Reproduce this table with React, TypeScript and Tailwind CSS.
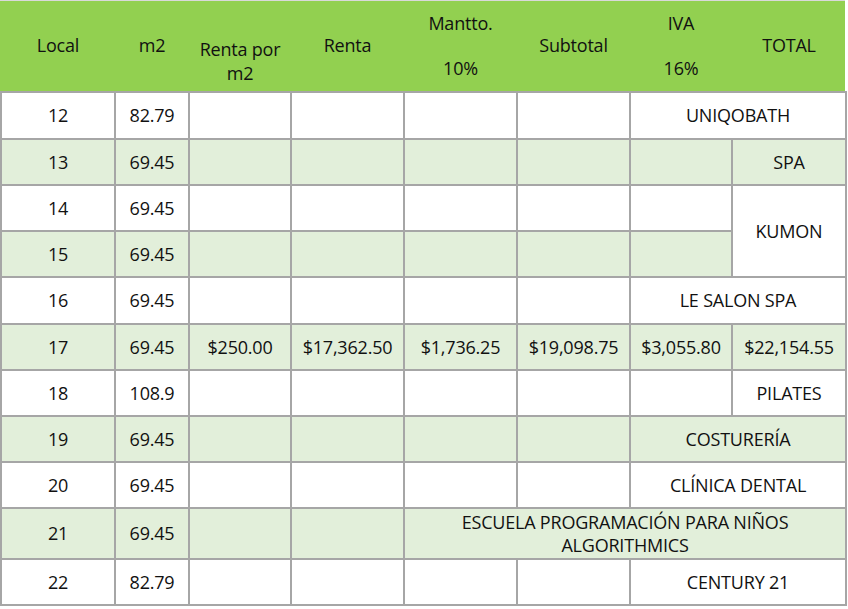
type CellSpec = {
  text?: string
  span?: 2 | 4
  rowSpan?: boolean
  white?: boolean
}

type RowSpec = {
  green: boolean
  cells: (string | CellSpec)[]
}

const rows: RowSpec[] = [
  { green: false, cells: ['12', '82.79', '', '', '', '', { text: 'UNIQOBATH', span: 2 }] },
  { green: true, cells: ['13', '69.45', '', '', '', '', '', 'SPA'] },
  { green: false, cells: ['14', '69.45', '', '', '', '', '', { text: 'KUMON', rowSpan: true, white: true }] },
  { green: true, cells: ['15', '69.45', '', '', '', '', ''] },
  { green: false, cells: ['16', '69.45', '', '', '', '', { text: 'LE SALON SPA', span: 2 }] },
  {
    green: true,
    cells: ['17', '69.45', '$250.00', '$17,362.50', '$1,736.25', '$19,098.75', '$3,055.80', '$22,154.55'],
  },
  { green: false, cells: ['18', '108.9', '', '', '', '', '', 'PILATES'] },
  { green: true, cells: ['19', '69.45', '', '', '', '', { text: 'COSTURERÍA', span: 2 }] },
  { green: false, cells: ['20', '69.45', '', '', '', '', { text: 'CLÍNICA DENTAL', span: 2 }] },
  {
    green: true,
    cells: ['21', '69.45', '', '', { text: 'ESCUELA PROGRAMACIÓN PARA NIÑOS ALGORITHMICS', span: 4 }],
  },
  { green: false, cells: ['22', '82.79', '', '', '', '', { text: 'CENTURY 21', span: 2 }] },
]

function Cell({ spec, green }: { spec: string | CellSpec; green: boolean }) {
  const cell: CellSpec = typeof spec === 'string' ? { text: spec } : spec
  const bg = green && !cell.white ? 'bg-[#e2efda]' : 'bg-white'
  const span = cell.span === 2 ? 'col-span-2' : cell.span === 4 ? 'col-span-4' : ''
  const rowSpan = cell.rowSpan ? 'row-span-2' : ''

  return (
    <div
      className={`flex items-center justify-center px-2 text-center leading-[23px] ${bg} ${span} ${rowSpan}`}
    >
      {cell.text}
    </div>
  )
}

export default function App() {
  return (
    <div
      className="w-[848px] bg-white text-[18px] font-medium tracking-[-0.2px] text-[#111]"
      style={{ fontFamily: '"Open Sans", "Liberation Sans", sans-serif' }}
    >
      {/* header */}
      <div className="grid h-[91px] w-[845px] grid-cols-[112px_72px_100px_111px_111px_111px_100px_112px] gap-x-[2px] border-t border-[#d9d9d9] bg-[#92d050] px-[2px] text-center">
        <div className="flex items-center justify-center pb-[2px]">Local</div>
        <div className="flex items-center justify-center pb-[2px]">m2</div>
        <div className="flex flex-col items-center justify-end pb-[6px] leading-[24px]">
          <span>Renta por</span>
          <span>m2</span>
        </div>
        <div className="flex items-center justify-center pb-[2px]">Renta</div>
        <div className="flex flex-col items-center justify-center leading-[22.5px]">
          <span>Mantto.</span>
          <span>&nbsp;</span>
          <span>10%</span>
        </div>
        <div className="flex items-center justify-center pb-[2px]">Subtotal</div>
        <div className="flex flex-col items-center justify-center leading-[22.5px]">
          <span>IVA</span>
          <span>&nbsp;</span>
          <span>16%</span>
        </div>
        <div className="flex items-center justify-center pb-[2px]">TOTAL</div>
      </div>

      {/* body */}
      <div className="grid w-[847px] grid-cols-[112px_72px_100px_111px_111px_111px_100px_112px] grid-rows-[45px_44px_44px_44px_45px_44px_44px_44px_44px_49px_44px] gap-[2px] bg-[#a6a6a6] p-[2px]">
        {rows.map((row, i) =>
          row.cells.map((c, j) => <Cell key={`${i}-${j}`} spec={c} green={row.green} />),
        )}
      </div>
    </div>
  )
}
